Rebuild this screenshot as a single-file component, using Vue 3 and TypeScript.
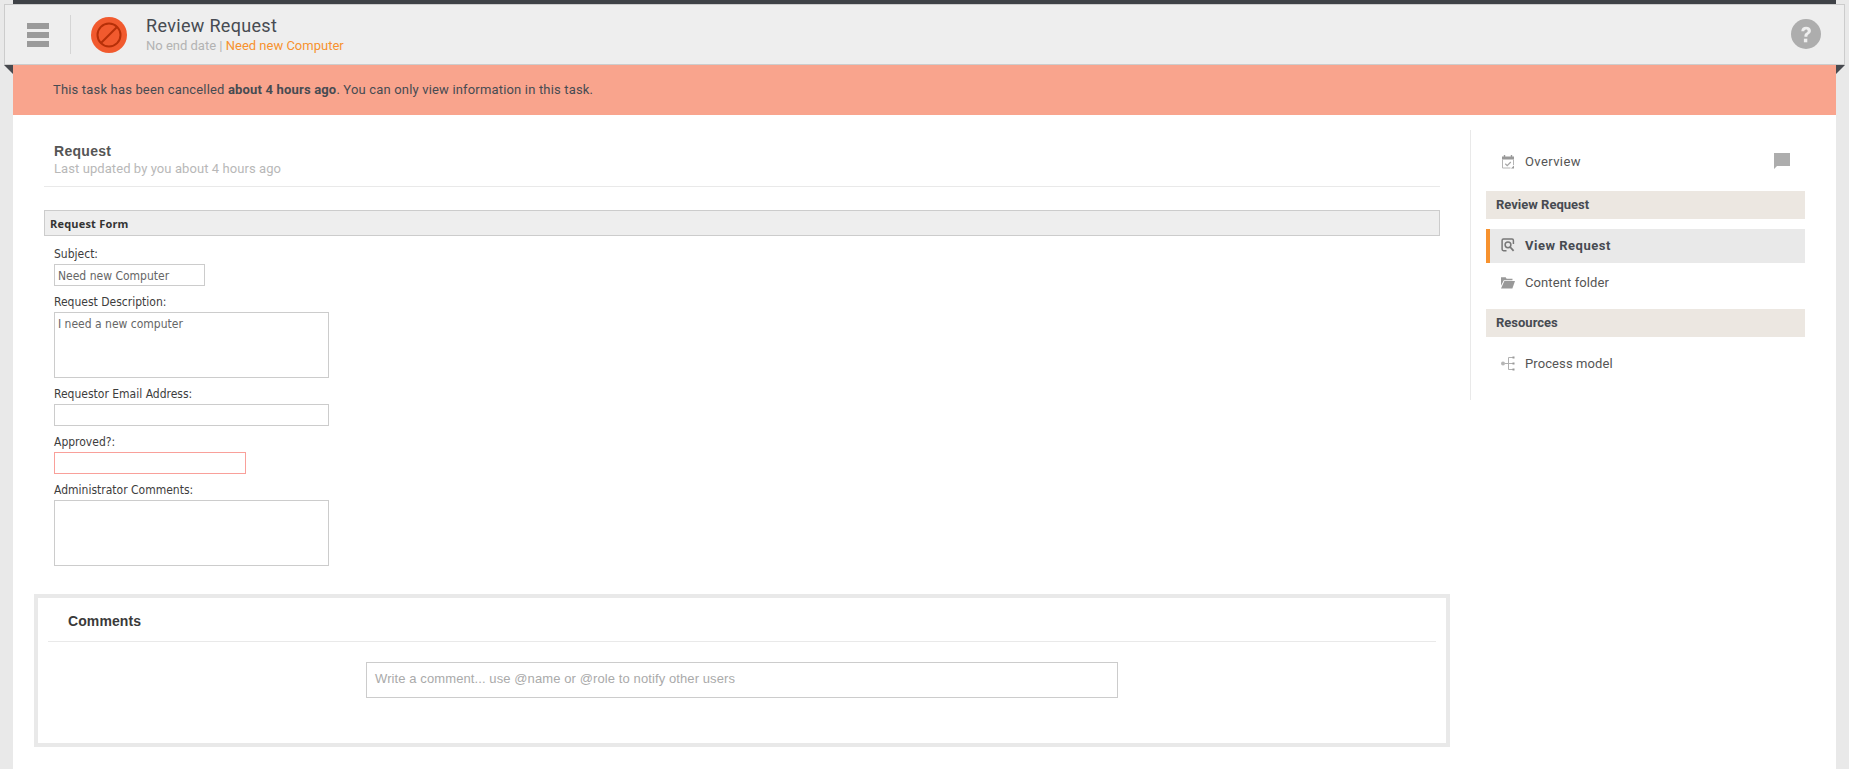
<script setup lang="ts">
interface Field { label: string; kind: string; value: string }
const fields: Field[] = [
  { label: 'Subject:', kind: 'short', value: 'Need new Computer' },
  { label: 'Request Description:', kind: 'area', value: 'I need a new computer' },
  { label: 'Requestor Email Address:', kind: 'wide', value: '' },
  { label: 'Approved?:', kind: 'error', value: '' },
  { label: 'Administrator Comments:', kind: 'area', value: '' },
]
</script>

<template>
  <div class="page">
    <div class="shell">
      <header class="topbar">
        <span class="corner corner-left"></span>
        <span class="corner corner-right"></span>
        <div class="burger"><i></i><i></i><i></i></div>
        <div class="divider"></div>
        <svg class="status" width="36" height="36" viewBox="0 0 36 36">
          <circle cx="18" cy="18" r="18" fill="#f15a2e" />
          <circle cx="18" cy="18" r="11.5" fill="none" stroke="#b52f08" stroke-width="2" />
          <path d="M10 26 26 10" stroke="#b52f08" stroke-width="2" />
        </svg>
        <div class="heading">
          <div class="title">Review Request</div>
          <div class="sub">No end date | <span class="link">Need new Computer</span></div>
        </div>
        <svg class="help" width="30" height="30" viewBox="0 0 30 30">
          <circle cx="15" cy="15" r="15" fill="#adadad" />
          <path d="M10.300 12.200c.1-2.900 2-4.400 4.800-4.400 2.800 0 4.800 1.500 4.800 3.900 0 1.700-.9 2.600-2.200 3.500-1 .7-1.300 1.200-1.300 2.600h-3c0-2.200.5-3.100 1.800-4 .9-.6 1.500-1.100 1.500-1.900 0-.9-.6-1.500-1.600-1.500s-1.700.7-1.800 1.800z" fill="#eee" />
          <rect x="12.900" y="19.700" width="3.400" height="3.600" fill="#eee" />
        </svg>
      </header>

      <div class="banner">This task has been cancelled <b>about 4 hours ago</b>. You can only view information in this task.</div>

      <div class="columns">
        <main class="content">
          <div class="req-head">
            <div class="req-title">Request</div>
            <div class="req-sub">Last updated by you about 4 hours ago</div>
          </div>
          <div class="form-title">Request Form</div>
          <div class="form">
            <div v-for="f in fields" :key="f.label" class="field">
              <label>{{ f.label }}</label>
              <div :class="['control', f.kind]">{{ f.value }}</div>
            </div>
          </div>
          <section class="comments">
            <div class="comments-title">Comments</div>
            <div class="comment-input-row">
              <div class="comment-input">Write a comment... use @name or @role to notify other users</div>
            </div>
          </section>
        </main>

        <aside class="side">
          <div class="nav-row overview">
            <svg class="ico" width="14" height="14" viewBox="0 0 14 14" fill="none">
              <path d="M1 1.500h12V4.500H1z" fill="#999" />
              <path d="M3.500 0v2M10.500 0v2" stroke="#999" stroke-width="1.400" />
              <path d="M1.500 4.500v8.500h8M12.500 4.500v5.500" stroke="#b5b5b5" />
              <path d="M10 13.500l3-3v3z" fill="#999" />
              <path d="M4.300 8.800 6.200 10.600 9.800 7" stroke="#a5a5a5" stroke-width="1.200" />
            </svg>
            <span>Overview</span>
            <svg class="bubble" width="16" height="16" viewBox="0 0 16 16"><path d="M0 0h16v13H3l-3 3z" fill="#adadad" /></svg>
          </div>
          <div class="group">Review Request</div>
          <div class="nav-row active">
            <svg class="ico" width="14" height="14" viewBox="0 0 14 14" fill="none" stroke="#777" stroke-width="1.500">
              <path d="M5.500 12.700H2.500a1.400 1.400 0 0 1-1.400-1.400V2.500a1.400 1.400 0 0 1 1.400-1.400h8.500a1.400 1.400 0 0 1 1.400 1.400v3.500" />
              <circle cx="7" cy="6.800" r="2.900" />
              <path d="m9.100 9 3.500 3.800" stroke-width="1.800" />
            </svg>
            <span>View Request</span>
          </div>
          <div class="nav-row folder">
            <svg class="ico" width="14" height="13" viewBox="0 0 15 13">
              <path d="M0 1h5l1 1.400h6.300V4H3L0 10z" fill="#999" />
              <path d="M3.600 5H15l-2.800 8H0z" fill="#999" />
            </svg>
            <span>Content folder</span>
          </div>
          <div class="group">Resources</div>
          <div class="nav-row process">
            <svg class="ico" width="14" height="15" viewBox="0 0 14 15" fill="none" stroke="#b0b0b0">
              <circle cx="2" cy="7.500" r="2" fill="#b5b5b5" stroke="none" />
              <path d="M4 7.500h8M7.500 1.500v12M7.500 1.500H12M7.500 13.500H12" />
              <path d="M11.500 0.500h2v2h-2zM11.500 6.500h2v2h-2zM11.500 12.500h2v2h-2z" fill="#999" stroke="none" />
            </svg>
            <span>Process model</span>
          </div>
        </aside>
      </div>
    </div>
  </div>
</template>

<style>
html, body { margin: 0; background: #e9e9e9; }
</style>

<style scoped>
.page { padding: 0 13px; min-height: 769px; box-sizing: border-box; font-family: Roboto, "Liberation Sans", sans-serif; overflow: hidden; }
.shell { background: #fff; min-height: 769px; border-top: 4px solid #3f4247; box-sizing: border-box; }
.topbar { position: relative; box-sizing: border-box; height: 61px; margin: 0 -9px; background: #eee; border: 1px solid #ccc; display: flex; align-items: center; padding-left: 22px; padding-right: 22px; }
.corner { position: absolute; top: 60px; width: 0; height: 0; border-top: 9px solid #47494e; }
.corner-left { left: -1px; border-left: 9px solid transparent; }
.corner-right { right: -1px; border-right: 9px solid transparent; }
.burger { width: 22px; display: flex; flex-direction: column; gap: 3px; margin-top: 1px; }
.burger i { display: block; height: 6px; background: #9a9a9a; }
.divider { width: 1px; height: 39px; background: #d5d5d5; margin-left: 21px; }
.status { margin-left: 20px; flex: none; margin-top: 1px; }
.heading { margin-left: 19px; flex: 1; }
.title { font-size: 18px; line-height: 22px; color: #474b52; letter-spacing: .32px; }
.sub { font-size: 13px; line-height: 17px; color: #b3b3b3; }
.link { color: #f7922e; }
.help { flex: none; margin-top: -1px; margin-right: 1px; }
.banner { height: 50px; box-sizing: border-box; background: #f9a48d; padding-left: 40px; font-size: 13px; line-height: 50px; color: #474b52; letter-spacing: .17px; }
.columns { display: flex; align-items: flex-start; }
.content { width: 1427px; flex: none; padding-left: 21px; box-sizing: border-box; }
.req-head { margin-top: 26px; height: 46px; border-bottom: 1px solid #e9e9e9; margin-left: 10px; padding-left: 10px; padding-top: 2px; box-sizing: border-box; }
.req-title { font: 700 14px/16px "Liberation Sans", sans-serif; color: #555; letter-spacing: .3px; }
.req-sub { font-size: 13px; line-height: 19px; color: #b8b8b8; letter-spacing: .08px; }
.form-title { margin: 23px 0 0 10px; height: 26px; box-sizing: border-box; background: #eee; border: 1px solid #ccc; padding-left: 5px; font: 700 11px/26px "Open Sans", sans-serif; color: #333; letter-spacing: .2px; }
.form { padding-left: 20px; padding-top: 8px; font-family: "DejaVu Sans Condensed", "DejaVu Sans", sans-serif; }
.field label { display: block; height: 20px; font-size: 12px; line-height: 20px; color: #3d3d3d; }
.field { margin-bottom: 6px; }
.control { box-sizing: border-box; border: 1px solid #ccc; font-size: 12px; color: #666; padding: 1px 3px 0; height: 22px; line-height: 20px; background: #fff; }
.short { width: 151px; }
.wide { width: 275px; }
.area { width: 275px; height: 66px; }
.error { width: 192px; border-color: #f9a09a; }
.comments { margin-top: 28px; width: 1416px; height: 153px; box-sizing: border-box; border: 4px solid #e9e9e9; background: #fff; padding: 0 10px; }
.comments-title { height: 43px; border-bottom: 1px solid #e9e9e9; padding-left: 20px; font: 700 14px/47px "Liberation Sans", sans-serif; color: #3a3a3a; letter-spacing: .1px; box-sizing: content-box; }
.comment-input-row { display: flex; justify-content: center; padding-top: 20px; }
.comment-input { box-sizing: border-box; width: 752px; height: 36px; border: 1px solid #ccc; padding-left: 8px; font: 13px/32px "Liberation Sans", sans-serif; color: #aaa; letter-spacing: .1px; }
.side { margin-top: 15px; margin-left: 30px; width: 335px; height: 270px; border-left: 1px solid #e9e9e9; padding-left: 15px; box-sizing: border-box; }
.nav-row { display: flex; align-items: center; font-size: 13px; color: #555; padding-left: 15px; position: relative; box-sizing: border-box; }
.nav-row .ico { flex: none; }
.nav-row span { margin-left: 10px; letter-spacing: .1px; }
.overview { height: 61px; padding-top: 2px; }
.overview span { letter-spacing: .4px; }
.bubble { position: absolute; right: 15px; top: 23px; }
.group { height: 28px; background: #ece7e1; padding-left: 10px; font-size: 13px; font-weight: 700; line-height: 28px; color: #474b52; }
.active { height: 34px; margin-top: 10px; background: #e9e9e9; border-left: 4px solid #f7922e; padding-left: 11px; padding-bottom: 2px; font-weight: 700; color: #474b52; }
.nav-row.active span { letter-spacing: .5px; }
.folder { height: 38px; margin-bottom: 8px; }
.process { height: 52px; }
</style>
